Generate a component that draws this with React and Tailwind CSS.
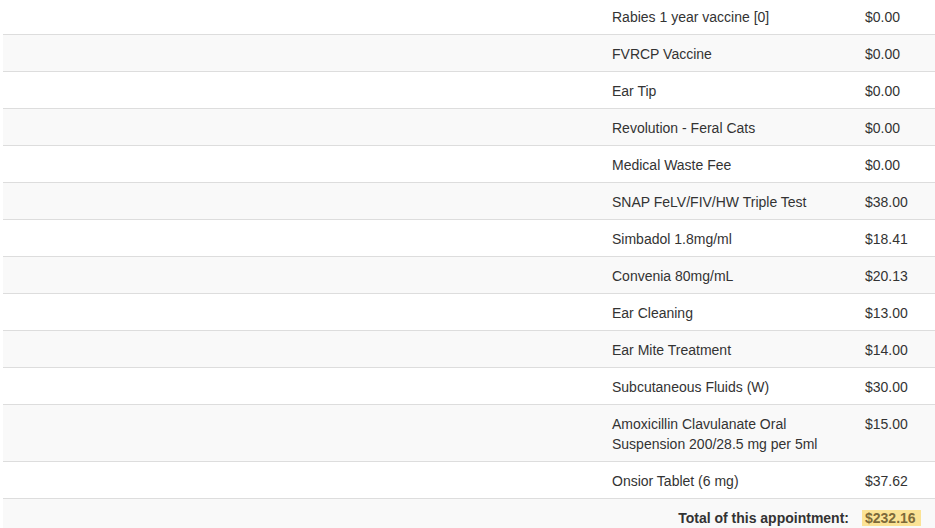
import React from "react";

const items = [
  ["Rabies 1 year vaccine [0]", "$0.00"],
  ["FVRCP Vaccine", "$0.00"],
  ["Ear Tip", "$0.00"],
  ["Revolution - Feral Cats", "$0.00"],
  ["Medical Waste Fee", "$0.00"],
  ["SNAP FeLV/FIV/HW Triple Test", "$38.00"],
  ["Simbadol 1.8mg/ml", "$18.41"],
  ["Convenia 80mg/mL", "$20.13"],
  ["Ear Cleaning", "$13.00"],
  ["Ear Mite Treatment", "$14.00"],
  ["Subcutaneous Fluids (W)", "$30.00"],
  ["Amoxicillin Clavulanate Oral Suspension 200/28.5 mg per 5ml", "$15.00"],
  ["Onsior Tablet (6 mg)", "$37.62"],
];

export default function App() {
  return (
    <div
      className="w-[935px] h-[528px] overflow-hidden bg-white text-[#333] text-[14px] leading-[20px]"
      style={{ fontFamily: '"Liberation Sans", Arial, sans-serif' }}
    >
      <div className="ml-[3px] -mt-[3px] flex flex-col">
        {items.map(([name, price], i) => (
          <div
            key={i}
            className={`grid grid-cols-[601px_253px_1fr] border-t border-[#ddd] ${
              i % 2 === 1 ? "bg-[#f9f9f9]" : "bg-white"
            }`}
          >
            <div className="px-2 pt-[9px] pb-[7px]"></div>
            <div className="px-2 pt-[9px] pb-[7px]">{name}</div>
            <div className="px-2 pt-[9px] pb-[7px]">{price}</div>
          </div>
        ))}
        <div
          className={`grid grid-cols-[601px_253px_1fr] border-t border-[#ddd] ${
            items.length % 2 === 1 ? "bg-[#f9f9f9]" : "bg-white"
          }`}
        >
          <div className="px-2 pt-[9px] pb-[7px]"></div>
          <div className="px-2 pt-[9px] pb-[7px] text-right font-bold">Total of this appointment:</div>
          <div className="px-2 pt-[9px] pb-[7px] font-bold">
            <mark className="-ml-[3px] pl-[3px] pr-[5px] py-0 bg-[#fbe395] text-[#7d6a3a]">$232.16</mark>
          </div>
        </div>
      </div>
    </div>
  );
}
